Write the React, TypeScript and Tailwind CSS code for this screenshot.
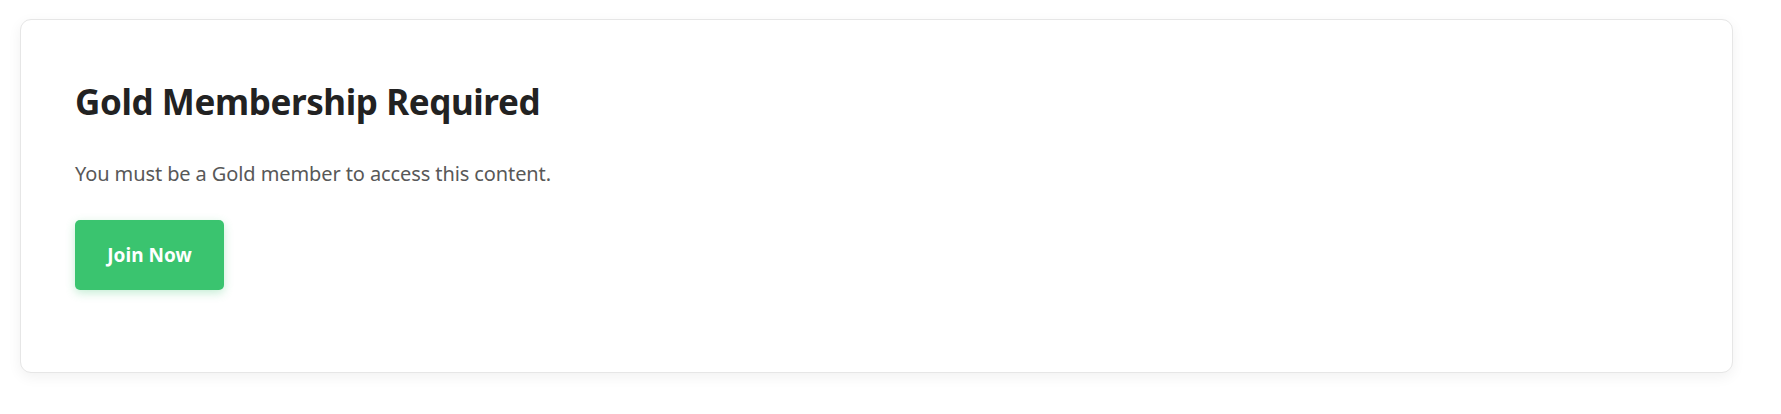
export default function App() {
  return (
    <div
      className="min-h-screen bg-white pt-[19px] pl-[20px] pr-[48px]"
      style={{ fontFamily: '"Noto Sans", "Open Sans", sans-serif' }}
    >
      <div className="rounded-[11px] border border-[#e6e6e6] bg-white pl-[54px] pt-[64px] pb-[82px] shadow-[0_4px_14px_rgba(0,0,0,0.06)]">
        <h1 className="text-[35px] leading-none font-bold tracking-[-0.4px] text-[#222222]">
          Gold Membership Required
        </h1>

        <p className="mt-[45px] text-[20px] leading-none tracking-[-0.1px] text-[#585858]">
          You must be a Gold member to access this content.
        </p>

        <button
          type="button"
          className="mt-[36px] flex h-[70px] w-[149px] items-center justify-center rounded-[5px] bg-[#3ac46f] text-[19px] font-bold text-white shadow-[0_3px_10px_rgba(58,196,111,0.3)]"
        >
          Join Now
        </button>
      </div>
    </div>
  )
}
